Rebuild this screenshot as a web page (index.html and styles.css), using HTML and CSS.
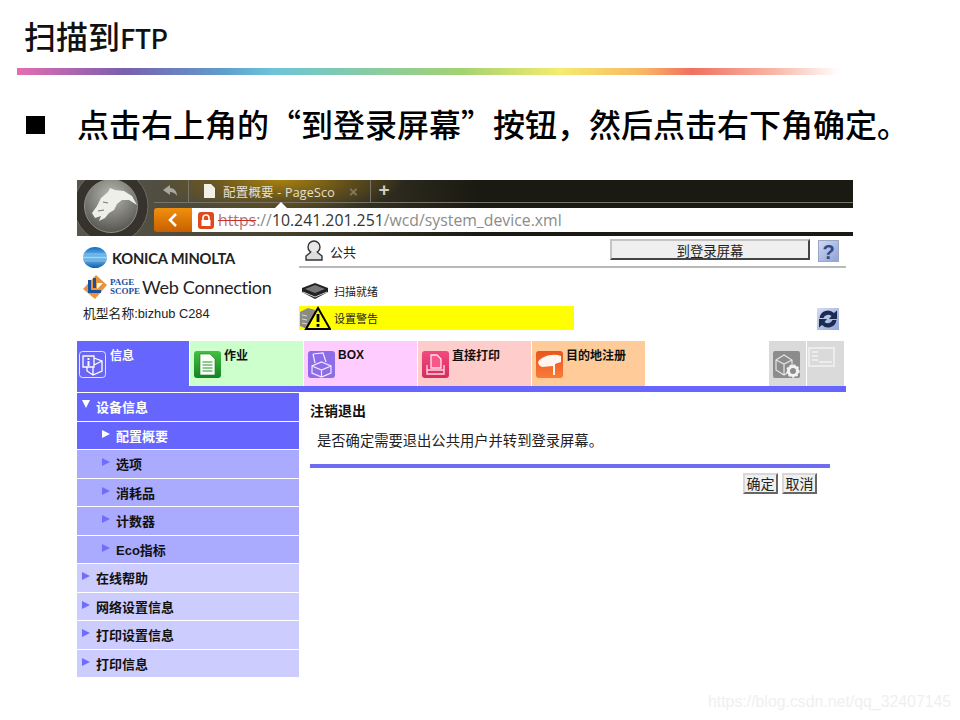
FILE: index.html
```html
<!DOCTYPE html>
<html lang="zh-CN">
<head>
<meta charset="utf-8">
<title>扫描到FTP</title>
<link rel="stylesheet" href="styles.css">
</head>
<body>
<div class="slide">
  <h1 class="title">扫描到<span class="title-latin">FTP</span></h1>
  <div class="rule"></div>
  <p class="lead"><span class="bullet"></span><span>点击右上角的“到登录屏幕”按钮，然后点击右下角确定。</span></p>

  <div class="shot">
    <div class="chrome">
      <svg class="cat" viewBox="0 0 76 56" width="76" height="56">
        <defs>
          <radialGradient id="ball" cx="50%" cy="30%" r="75%"><stop offset="0" stop-color="#b8b8b3"/><stop offset="1" stop-color="#4f4e48"/></radialGradient>
        </defs>
        <circle cx="34" cy="26" r="37" fill="#35332b" stroke="#6e6c60" stroke-width="1"/>
        <circle cx="34" cy="26" r="26.500" fill="url(#ball)" stroke="#8f8e87" stroke-width="1"/>
        <path d="M15 33 L20 26 L24 18 L31 12 L33 8 L38 10 L47 11 L55 16 L60 25 L52 20 L45 20 L40 24 L37 30 L32 33 L28 38 L22 41 L24 36 L18 38 Z" fill="#efefea"/>
        <path d="M26 22 L31 23 M21 31 L27 30" stroke="#77766f" stroke-width="1.200" fill="none"/>
      </svg>
      <div class="tabstrip">
        <div class="back-cell">
          <svg viewBox="0 0 16 12" width="16" height="12"><path d="M7 0 L0 5 L7 10 V7 C10 7 12 8 14 11 C14 6 11 3 7 3 Z" fill="#aaa89e"/></svg>
        </div>
        <div class="tab">
          <svg viewBox="0 0 11 14" width="11" height="14"><path d="M0 0 H7 L11 4 V14 H0 Z" fill="#f1efe6"/></svg>
          <span class="tab-text">配置概要 - PageSco</span>
          <span class="tab-x">×</span>
        </div>
        <div class="tab-plus">+</div>
      </div>
      <div class="urlrow">
        <div class="url-back">
          <svg viewBox="0 0 10 14" width="10" height="14"><path d="M8 1 L2 7 L8 13" fill="none" stroke="#fff" stroke-width="2.500"/></svg>
        </div>
        <div class="url">
          <svg viewBox="0 0 16 17" width="16" height="17"><rect width="16" height="17" rx="3" fill="#de4a1c"/><rect x="3.500" y="8" width="9" height="6" fill="#fff"/><path d="M5 8 V6 a3 3 0 0 1 6 0 V8" fill="none" stroke="#fff" stroke-width="1.600"/></svg>
          <span class="scheme">https</span><span class="sep">://</span><span class="host">10.241.201.251</span><span class="sep">/wcd/system_device.xml</span>
        </div>
      </div>
      <div class="notch"></div>
    </div>

    <div class="page">
      <div class="page-top">
        <div class="brand">
          <div class="brand-row">
            <svg viewBox="0 0 24 21" width="24" height="21"><defs><linearGradient id="globe" x1="0" y1="0" x2="0" y2="1"><stop offset="0" stop-color="#0a6fc4"/><stop offset=".5" stop-color="#7fc4ee"/><stop offset="1" stop-color="#0a5fb4"/></linearGradient></defs><ellipse cx="12" cy="10.500" rx="12" ry="10.500" fill="url(#globe)"/><path d="M1 7 H23 M0 10.500 H24 M1 14 H23" stroke="#fff" stroke-width=".5" opacity=".6"/></svg>
            <span class="konica">KONICA MINOLTA</span>
          </div>
          <div class="brand-row pagescope">
            <svg viewBox="0 0 24 24" width="24" height="24"><path d="M13 0 L24 10 L12 24 L0 14 Z" fill="#e8953a"/><path d="M5 5 H8 V15 H18 V18 H5 Z" fill="#1d4f9e"/><path d="M10 3 H13 V13 H10 Z" fill="#1d4f9e"/><path d="M14 8 H20 L14 14 Z" fill="#fff"/></svg>
            <span class="ps-word"><span>PAGE</span><span>SCOPE</span></span>
            <span class="webconn">Web Connection</span>
          </div>
          <div class="model">机型名称:bizhub C284</div>
        </div>
        <div class="status">
          <div class="user-row">
            <svg class="user-ic" viewBox="0 0 20 22" width="20" height="22"><circle cx="10" cy="7" r="6" fill="#e8e8e8" stroke="#333" stroke-width="1.400"/><path d="M7 12 L2 16 V20 H18 V16 L13 12" fill="#ddd" stroke="#333" stroke-width="1.400"/></svg>
            <span class="user-name">公共</span>
            <button class="login-btn" type="button">到登录屏幕</button>
            <div class="help">?</div>
          </div>
          <div class="scan-row">
            <svg viewBox="0 0 28 18" width="28" height="18"><path d="M14 1 L27 6 V10 L14 17 L1 10 V6 Z" fill="#222"/><path d="M14 3 L24 7 L14 11 L4 7 Z" fill="#777"/><path d="M2 10 L14 15 L26 10" fill="none" stroke="#ccc"/></svg>
            <span>扫描就绪</span>
          </div>
          <div class="warn-row">
            <div class="warn">
              <svg viewBox="0 0 32 24" width="32" height="24"><path d="M1 6 L9 2 L16 4 V22 L8 23 L1 20 Z" fill="#8b8b85"/><path d="M3 9 L8 10 M3 13 L8 14 M3 17 L8 18" stroke="#d8d8d0"/><path d="M19 2 L31 23 H7 Z" fill="#ffff00" stroke="#000" stroke-width="2"/><rect x="17.600" y="8" width="2.800" height="8" fill="#000"/><rect x="17.600" y="18" width="2.800" height="2.800" fill="#000"/></svg>
              <span>设置警告</span>
            </div>
            <div class="refresh">
              <svg viewBox="0 0 22 22" width="22" height="22"><path d="M2.500 10 A8.500 8.500 0 0 1 17 5 L20 2.500 V11 H12 L14.500 8 A5 5 0 0 0 6.500 10 Z" fill="#1c2c50"/><path d="M19.500 12 A8.500 8.500 0 0 1 5 17 L2 19.500 V11 H10 L7.500 14 A5 5 0 0 0 15.500 12 Z" fill="#1c2c50"/></svg>
            </div>
          </div>
        </div>
      </div>

      <nav class="tabs">
        <div class="nav-tab t-info">
          <svg class="tile" viewBox="0 0 27 27" width="27" height="27"><rect x=".5" y=".5" width="26" height="26" rx="3" fill="#6a66f0" stroke="#e4e4ff"/><path d="M4 5 H15 V16 H4 Z M15 7 L23 10 V20 L14 24 L8 20 V16 M15 14 L23 10 M14 16 V24" fill="none" stroke="#fff" stroke-width="1.300"/><rect x="8.500" y="10" width="2" height="5" fill="#fff"/><rect x="8.500" y="7" width="2" height="2" fill="#fff"/></svg>
          <span class="lbl on">信息</span>
        </div>
        <div class="nav-tab t-job">
          <svg class="tile" viewBox="0 0 27 27" width="27" height="27"><defs><linearGradient id="gj" x1="0" y1="0" x2="0" y2="1"><stop offset="0" stop-color="#43c043"/><stop offset="1" stop-color="#12851f"/></linearGradient></defs><rect width="27" height="27" rx="3" fill="url(#gj)"/><path d="M6 3 H16 L21 8 V24 H6 Z" fill="#fbfff6" stroke="#1a7a24" stroke-width=".6"/><path d="M8.500 11 H18.500 M8.500 14 H18.500 M8.500 17 H18.500 M8.500 20 H18.500" stroke="#6fb56f" stroke-width="1.400"/></svg>
          <span class="lbl">作业</span>
        </div>
        <div class="nav-tab t-box">
          <svg class="tile" viewBox="0 0 27 27" width="27" height="27"><rect width="27" height="27" rx="3" fill="#8e6ce8"/><path d="M5 3 L15 2 L18 11 M5 3 L7 12 M13.500 11 L23 15 V22 L13.500 26 L4 22 V15 Z M4 15 L13.500 19 L23 15 M13.500 19 V26" fill="none" stroke="#f1eaff" stroke-width="1.200"/></svg>
          <span class="lbl lbl-box">BOX</span>
        </div>
        <div class="nav-tab t-print">
          <svg class="tile" viewBox="0 0 27 27" width="27" height="27"><defs><linearGradient id="gp" x1="0" y1="0" x2="0" y2="1"><stop offset="0" stop-color="#f24a80"/><stop offset="1" stop-color="#d92a5c"/></linearGradient></defs><rect width="27" height="27" rx="3" fill="url(#gp)"/><path d="M9 4 H15 L19 8 V17 H9 Z" fill="#f7588a" stroke="#ffe4ec" stroke-width="1.300"/><path d="M5 14 V23 H22 V14 M5 19 H22" fill="none" stroke="#ffd6e0" stroke-width="1.400"/></svg>
          <span class="lbl">直接打印</span>
        </div>
        <div class="nav-tab t-dest">
          <svg class="tile" viewBox="0 0 27 27" width="27" height="27"><defs><linearGradient id="gd" x1="0" y1="0" x2="0" y2="1"><stop offset="0" stop-color="#e8561c"/><stop offset="1" stop-color="#fb7a38"/></linearGradient></defs><rect width="27" height="27" rx="3" fill="url(#gd)"/><path d="M2 11 C6 5 17 2 25 5 L25 11 L19 13 L19 24 H17 V15 L6 16 L3 14 Z" fill="#fff6ef"/></svg>
          <span class="lbl">目的地注册</span>
        </div>
        <div class="nav-tab grey first-grey">
          <svg class="tile" viewBox="0 0 27 27" width="27" height="27"><rect width="27" height="27" rx="2" fill="#8c8c8c"/><path d="M3 9 L11 4 L19 9 V19 L11 24 L3 19 Z M3 9 L11 13 L19 9 M11 13 V24" fill="none" stroke="#e5e5e5" stroke-width="1.200"/><circle cx="20" cy="20" r="4.500" fill="#8c8c8c" stroke="#f2f2f2" stroke-width="3"/><circle cx="20" cy="20" r="6" fill="none" stroke="#f2f2f2" stroke-width="1.500" stroke-dasharray="2 2"/></svg>
        </div>
        <div class="nav-tab grey">
          <svg class="tile2" viewBox="0 0 27 20" width="27" height="20"><rect x="1" y="1" width="25" height="18" fill="none" stroke="#ececec" stroke-width="2"/><path d="M4 5 H10 M4 9 H10 M4 13 H10 M11 15 H24" stroke="#ececec" stroke-width="2"/></svg>
        </div>
      </nav>
      <div class="tabline"></div>

      <div class="main">
        <ul class="side">
          <li class="sel lvl1"><span class="arr down"></span>设备信息</li>
          <li class="sel lvl2"><span class="arr white"></span>配置概要</li>
          <li class="sub lvl2"><span class="arr"></span>选项</li>
          <li class="sub lvl2"><span class="arr"></span>消耗品</li>
          <li class="sub lvl2"><span class="arr"></span>计数器</li>
          <li class="sub lvl2"><span class="arr"></span>Eco指标</li>
          <li class="top lvl1"><span class="arr"></span>在线帮助</li>
          <li class="top lvl1"><span class="arr"></span>网络设置信息</li>
          <li class="top lvl1"><span class="arr"></span>打印设置信息</li>
          <li class="top lvl1"><span class="arr"></span>打印信息</li>
        </ul>
        <section class="content">
          <h2 class="c-title">注销退出</h2>
          <p class="c-text">是否确定需要退出公共用户并转到登录屏幕。</p>
          <div class="c-rule"></div>
          <div class="c-actions">
            <button class="act" type="button">确定</button>
            <button class="act" type="button">取消</button>
          </div>
        </section>
      </div>
    </div>
  </div>
  <div class="watermark">https://blog.csdn.net/qq_32407145</div>
</div>
</body>
</html>
```

FILE: styles.css
```css
* { box-sizing: border-box; }
html, body { margin: 0; padding: 0; background: #fff; }
body { font-family: "Noto Sans CJK SC", "Liberation Sans", sans-serif; color: #000; }
.slide { position: relative; width: 960px; height: 720px; overflow: hidden; }

.title { margin: 0; padding: 13px 0 0 24px; height: 68px; font-size: 32px; line-height: 44px; font-weight: 500; color: #111; white-space: nowrap; }
.title-latin { font-size: 27px; letter-spacing: -.6px; }
.rule { margin-left: 17px; width: 823px; height: 7px; background: linear-gradient(90deg, #e56db1 0, #7a5fae 13%, #5f9dcc 25%, #6cc4d8 31%, #a3d273 54%, #f5ec6e 66%, #f8b765 76%, #f0705f 82%, #f8b7a8 92%, #fff 100%); }
.lead { margin: 0; padding: 24px 0 0 26px; height: 105px; display: flex; font-size: 32px; line-height: 48px; font-weight: 500; color: #000; }
.bullet { width: 19px; height: 18px; margin: 17px 32px 0 0; background: #000; flex: none; }

.shot { margin-left: 77px; width: 776px; }
.chrome { position: relative; height: 56px; padding-left: 77px; color: #ddd; overflow: hidden;
  background: radial-gradient(ellipse 125px 34px at 203px 0, #a8800f 0, rgba(125,95,20,.6) 55%, rgba(0,0,0,0) 100%), linear-gradient(90deg, #58564d 0, #45422f 200px, #1b1a12 400px); }
.cat { position: absolute; left: 0; top: 0; }
.notch { position: absolute; left: 198px; top: 22px; width: 0; height: 0; border-left: 6px solid transparent; border-right: 6px solid transparent; border-bottom: 6px solid #fff; }
.tabstrip { height: 23px; display: flex; align-items: center; border-bottom: 1px solid #77756a; }
.back-cell { width: 35px; height: 22px; display: flex; justify-content: center; align-items: center; border-right: 1px solid #77756a; }
.tab { width: 181px; display: flex; align-items: center; padding-left: 15px; font-family: "Open Sans", "Noto Sans CJK SC", sans-serif; font-size: 12.5px; }
.tab-text { margin-left: 8px; color: #e2e0d6; white-space: nowrap; width: 126px; letter-spacing: .2px; }
.tab-x { color: #807c66; font: 700 15px/15px "Liberation Sans", sans-serif; }
.tab-plus { height: 22px; width: 30px; border-left: 1px solid #77756a; padding-right: 3px; text-align: center; font-size: 19px; line-height: 19px; color: #cfcdc4; font-family: "Liberation Sans", sans-serif; font-weight: 700; }
.urlrow { margin-top: 5px; height: 24px; display: flex; }
.url-back { width: 38px; display: flex; align-items: center; justify-content: center; background: linear-gradient(#f0900e, #c85f00); border-radius: 3px 0 0 3px; }
.url { flex: 1; background: #fff; display: flex; align-items: center; padding-left: 6px; font-family: "Open Sans", sans-serif; font-size: 15.8px; color: #8b8b8b; white-space: nowrap; }
.scheme { margin-left: 4px; color: #b5726f; text-decoration: line-through; text-decoration-color: #c43030; }
.host { color: #333; }

.page { width: 769px; }
.page-top { display: flex; height: 105px; }
.brand { width: 222px; padding: 11px 0 0 6px; }
.brand-row { display: flex; align-items: center; height: 21px; }
.konica { margin-left: 5px; font-family: "Lato", sans-serif; font-size: 14.7px; font-weight: 700; color: #222; letter-spacing: -.2px; white-space: nowrap; }
.pagescope { height: 26px; margin-top: 6px; }
.ps-word { display: flex; flex-direction: column; margin-left: 3px; font-family: "Liberation Serif", serif; font-size: 9px; line-height: 9px; font-weight: 700; color: #1d4f9e; width: 32px; }
.webconn { font-family: "Lato", sans-serif; font-size: 18.1px; color: #222; white-space: nowrap; letter-spacing: -.3px; }
.model { margin-top: 5px; font-size: 12.8px; line-height: 18px; color: #222; font-family: "Liberation Sans", "Noto Sans CJK SC", sans-serif; white-space: nowrap; }

.status { flex: 1; min-width: 0; }
.user-row { height: 32px; padding: 3px 7px 0 5px; display: flex; align-items: flex-start; border-bottom: 2px solid #b9b9b9; }
.user-ic { margin-top: 1px; }
.user-name { margin: 1px 0 0 6px; font-size: 13px; line-height: 24px; color: #222; }
.login-btn { margin-left: auto; width: 200px; height: 21px; padding: 0; font: 13.4px/16px "Noto Sans CJK SC", sans-serif; color: #222; background: #efefef; border: 2px solid; border-color: #c4c4c4 #444 #444 #c4c4c4; }
.help { margin: 1px 0 0 8px; width: 21px; height: 22px; text-align: center; font: 700 20px/22px "Liberation Sans", sans-serif; color: #2f4a86; background: linear-gradient(135deg, #cfd8f2, #8fa3d8); border: 1px solid #9aa6c4; }
.scan-row { margin-top: 13px; height: 19px; padding-left: 2px; display: flex; align-items: center; font-size: 11px; color: #222; }
.scan-row span { margin-left: 5px; }
.warn-row { margin-top: 6px; display: flex; align-items: flex-start; }
.warn { width: 275px; height: 24px; background: #ffff00; display: flex; align-items: center; font-size: 11px; color: #222; }
.warn span { margin-left: 3px; }
.refresh { margin: 2px 7px 0 auto; width: 22px; height: 22px; background: linear-gradient(135deg, #d4dcf5, #93a6d8); }

.tabs { display: flex; height: 45px; }
.nav-tab { width: 113px; margin-right: 1px; padding: 10px 0 0 4px; display: flex; align-items: flex-start; }
.t-info { width: 112px; padding-left: 2px; background: #6666ff; }
.t-job { background: #ccffcc; }
.t-box { background: #ffccff; }
.t-print { background: #ffcccc; }
.t-dest { background: #ffcc99; margin-right: 0; }
.grey { width: 37px; background: #dadada; padding: 10px 0 0 4px; }
.first-grey { margin-left: auto; }
.grey:last-child { margin-right: 2px; padding: 6px 0 0 1px; }
.tile, .tile2 { flex: none; }
.lbl { margin: -4px 0 0 3px; font-size: 12px; line-height: 18px; font-weight: 700; color: #111; white-space: nowrap; font-family: "Liberation Sans", "Noto Sans CJK SC", sans-serif; }
.lbl.on { margin-left: 4px; color: #fff; }
.lbl-box { margin-top: -5px; }
.tabline { height: 6px; background: #6666ff; }

.main { display: flex; margin-top: 1px; }
.side { margin: 0; padding: 0; list-style: none; width: 222px; display: grid; grid-auto-rows: 28.5px; flex: none; }
.side li { display: flex; align-items: center; border-bottom: 1px solid #fff; font-size: 13px; font-weight: 700; color: #111; white-space: nowrap; font-family: "Liberation Sans", "Noto Sans CJK SC", sans-serif; }
.side .sel { background: #6666ff; color: #fff; }
.side .sub { background: #aaaaff; }
.side .top { background: #ccccff; }
.lvl1 { padding-left: 5px; }
.lvl2 { padding-left: 25px; }
.arr { flex: none; width: 0; height: 0; margin: -3px 6px 0 0; border-top: 4.5px solid transparent; border-bottom: 4.5px solid transparent; border-left: 8px solid #6f6cff; }
.arr.white { border-left-color: #fff; }
.arr.down { margin: -5px 6px 0 0; border-left: 4.5px solid transparent; border-right: 4.5px solid transparent; border-top: 8px solid #fff; border-bottom: 0; }

.content { width: 520px; margin-left: 11px; }
.c-title { margin: 7px 0 0; font-size: 14px; line-height: 20px; font-weight: 700; color: #111; }
.c-text { margin: 10px 0 0 7px; font-size: 14.3px; line-height: 20px; color: #222; white-space: nowrap; }
.c-rule { margin-top: 14px; height: 4px; background: #6f6cf0; }
.c-actions { margin-top: 5px; padding-right: 13px; display: flex; justify-content: flex-end; gap: 4px; }
.act { width: 35px; height: 21px; padding: 0; font: 14px/17px "Noto Sans CJK SC", sans-serif; color: #222; background: #efefef; border: 2px solid; border-color: #d8d8d8 #666 #666 #d8d8d8; }

.watermark { position: absolute; left: 708px; top: 692px; font: 15.85px/20px "Liberation Sans", sans-serif; color: #efefef; white-space: nowrap; }
```
